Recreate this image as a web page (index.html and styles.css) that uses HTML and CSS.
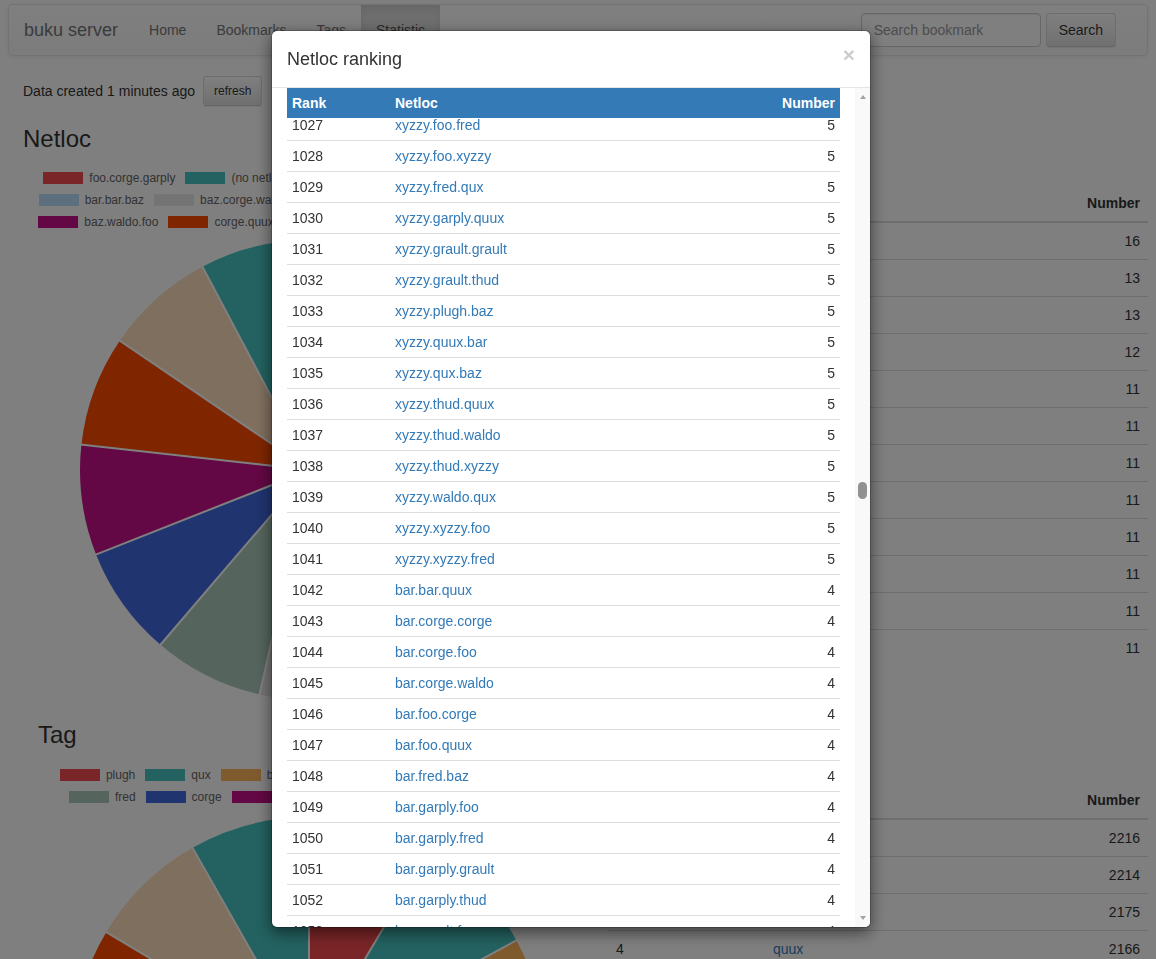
FILE: index.html
```html
<!DOCTYPE html>
<html lang="en">
<head>
<meta charset="utf-8">
<title>buku server - Statistic</title>
<link rel="stylesheet" href="styles.css">
</head>
<body>
<div class="page">
  <nav class="navbar">
    <a class="brand" href="#">buku server</a>
    <ul class="nav-links">
      <li><a href="#">Home</a></li>
      <li><a href="#">Bookmarks</a></li>
      <li><a href="#">Tags</a></li>
      <li class="active"><a href="#">Statistic</a></li>
    </ul>
    <form class="nav-search">
      <input class="search-input" type="text" placeholder="Search bookmark">
      <button class="btn btn-search" type="button">Search</button>
    </form>
  </nav>

  <div class="data-line">Data created 1 minutes ago <button class="btn btn-sm" type="button">refresh</button></div>

  <section class="stat-section">
    <div class="chart-col">
      <h3 class="section-title">Netloc</h3>
      <div class="chart">
        <div class="legend">
          <div class="legend-row">
            <span class="legend-item"><i class="legend-box p1"></i>foo.corge.garply</span>
            <span class="legend-item"><i class="legend-box p2"></i>(no netloc)</span>
            <span class="legend-item"><i class="legend-box p3"></i>fred.quux.xyzzy</span>
            <span class="legend-item"><i class="legend-box p4"></i>garply.waldo.thud</span>
          </div>
          <div class="legend-row">
            <span class="legend-item"><i class="legend-box p5"></i>bar.bar.baz</span>
            <span class="legend-item"><i class="legend-box p6"></i>baz.corge.waldo</span>
            <span class="legend-item"><i class="legend-box p7"></i>corge.thud.waldo</span>
            <span class="legend-item"><i class="legend-box p8"></i>baz.garply.garply</span>
          </div>
          <div class="legend-row">
            <span class="legend-item"><i class="legend-box p9"></i>baz.waldo.foo</span>
            <span class="legend-item"><i class="legend-box p10"></i>corge.quux.thud</span>
            <span class="legend-item"><i class="legend-box p11"></i>foo.garply.grault</span>
            <span class="legend-item"><i class="legend-box p12"></i>foo.plugh.waldo</span>
          </div>
        </div>
        <svg class="pie" width="574" height="464" viewBox="0 0 574 464">
          <g transform="translate(287 232) rotate(-90)">
            <circle class="slice slice-netloc p1" r="115" pathLength="360" stroke-dasharray="40.563 360" stroke-dashoffset="0"/>
            <circle class="slice slice-netloc p2" r="115" pathLength="360" stroke-dasharray="32.958 360" stroke-dashoffset="-40.563"/>
            <circle class="slice slice-netloc p3" r="115" pathLength="360" stroke-dasharray="32.958 360" stroke-dashoffset="-73.521"/>
            <circle class="slice slice-netloc p4" r="115" pathLength="360" stroke-dasharray="30.423 360" stroke-dashoffset="-106.479"/>
            <circle class="slice slice-netloc p5" r="115" pathLength="360" stroke-dasharray="27.887 360" stroke-dashoffset="-136.901"/>
            <circle class="slice slice-netloc p6" r="115" pathLength="360" stroke-dasharray="27.887 360" stroke-dashoffset="-164.789"/>
            <circle class="slice slice-netloc p7" r="115" pathLength="360" stroke-dasharray="27.887 360" stroke-dashoffset="-192.676"/>
            <circle class="slice slice-netloc p8" r="115" pathLength="360" stroke-dasharray="27.887 360" stroke-dashoffset="-220.563"/>
            <circle class="slice slice-netloc p9" r="115" pathLength="360" stroke-dasharray="27.887 360" stroke-dashoffset="-248.451"/>
            <circle class="slice slice-netloc p10" r="115" pathLength="360" stroke-dasharray="27.887 360" stroke-dashoffset="-276.338"/>
            <circle class="slice slice-netloc p11" r="115" pathLength="360" stroke-dasharray="27.887 360" stroke-dashoffset="-304.225"/>
            <circle class="slice slice-netloc p12" r="115" pathLength="360" stroke-dasharray="27.887 360" stroke-dashoffset="-332.113"/>
            <line class="sep" x1="0" y1="0" x2="231" y2="0" transform="rotate(0)"/>
            <line class="sep" x1="0" y1="0" x2="231" y2="0" transform="rotate(40.563)"/>
            <line class="sep" x1="0" y1="0" x2="231" y2="0" transform="rotate(73.521)"/>
            <line class="sep" x1="0" y1="0" x2="231" y2="0" transform="rotate(106.479)"/>
            <line class="sep" x1="0" y1="0" x2="231" y2="0" transform="rotate(136.901)"/>
            <line class="sep" x1="0" y1="0" x2="231" y2="0" transform="rotate(164.789)"/>
            <line class="sep" x1="0" y1="0" x2="231" y2="0" transform="rotate(192.676)"/>
            <line class="sep" x1="0" y1="0" x2="231" y2="0" transform="rotate(220.563)"/>
            <line class="sep" x1="0" y1="0" x2="231" y2="0" transform="rotate(248.451)"/>
            <line class="sep" x1="0" y1="0" x2="231" y2="0" transform="rotate(276.338)"/>
            <line class="sep" x1="0" y1="0" x2="231" y2="0" transform="rotate(304.225)"/>
            <line class="sep" x1="0" y1="0" x2="231" y2="0" transform="rotate(332.113)"/>
          </g>
        </svg>
      </div>
    </div>
    <div class="table-col">
      <h3 class="section-title">Netloc ranking</h3>
      <p class="table-note"><a href="#">View all netlocs</a></p>
      <table class="rank rank-netloc">
        <colgroup><col class="c-rank"><col><col class="c-num"></colgroup>
        <thead><tr><th>Rank</th><th>Netloc</th><th class="num">Number</th></tr></thead>
        <tbody>
          <tr><td>1</td><td><a href="#">foo.corge.garply</a></td><td class="num">16</td></tr>
          <tr><td>2</td><td><a href="#">(no netloc)</a></td><td class="num">13</td></tr>
          <tr><td>3</td><td><a href="#">fred.quux.xyzzy</a></td><td class="num">13</td></tr>
          <tr><td>4</td><td><a href="#">garply.waldo.thud</a></td><td class="num">12</td></tr>
          <tr><td>5</td><td><a href="#">bar.bar.baz</a></td><td class="num">11</td></tr>
          <tr><td>6</td><td><a href="#">baz.corge.waldo</a></td><td class="num">11</td></tr>
          <tr><td>7</td><td><a href="#">corge.thud.waldo</a></td><td class="num">11</td></tr>
          <tr><td>8</td><td><a href="#">baz.garply.garply</a></td><td class="num">11</td></tr>
          <tr><td>9</td><td><a href="#">baz.waldo.foo</a></td><td class="num">11</td></tr>
          <tr><td>10</td><td><a href="#">corge.quux.thud</a></td><td class="num">11</td></tr>
          <tr><td>11</td><td><a href="#">foo.garply.grault</a></td><td class="num">11</td></tr>
          <tr><td>12</td><td><a href="#">foo.plugh.waldo</a></td><td class="num">11</td></tr>
        </tbody>
      </table>
    </div>
  </section>

  <section class="stat-section">
    <div class="chart-col">
      <h3 class="section-title indent">Tag</h3>
      <div class="chart">
        <div class="legend">
          <div class="legend-row">
            <span class="legend-item"><i class="legend-box p1"></i>plugh</span>
            <span class="legend-item"><i class="legend-box p2"></i>qux</span>
            <span class="legend-item"><i class="legend-box p3"></i>bar</span>
            <span class="legend-item"><i class="legend-box p4"></i>quux</span>
            <span class="legend-item"><i class="legend-box p5"></i>waldo</span>
            <span class="legend-item"><i class="legend-box p6"></i>xyzzy-foo</span>
          </div>
          <div class="legend-row">
            <span class="legend-item"><i class="legend-box p7"></i>fred</span>
            <span class="legend-item"><i class="legend-box p8"></i>corge</span>
            <span class="legend-item"><i class="legend-box p9"></i>thud</span>
            <span class="legend-item"><i class="legend-box p10"></i>grault</span>
            <span class="legend-item"><i class="legend-box p11"></i>baz</span>
            <span class="legend-item"><i class="legend-box p12"></i>garply</span>
          </div>
        </div>
        <svg class="pie" width="574" height="482" viewBox="0 0 574 482">
          <g transform="translate(286 240) rotate(-90)">
            <circle class="slice slice-tag p1" r="118" pathLength="360" stroke-dasharray="30.764 360" stroke-dashoffset="0"/>
            <circle class="slice slice-tag p2" r="118" pathLength="360" stroke-dasharray="30.737 360" stroke-dashoffset="-30.764"/>
            <circle class="slice slice-tag p3" r="118" pathLength="360" stroke-dasharray="30.196 360" stroke-dashoffset="-61.501"/>
            <circle class="slice slice-tag p4" r="118" pathLength="360" stroke-dasharray="30.071 360" stroke-dashoffset="-91.697"/>
            <circle class="slice slice-tag p5" r="118" pathLength="360" stroke-dasharray="29.987 360" stroke-dashoffset="-121.768"/>
            <circle class="slice slice-tag p6" r="118" pathLength="360" stroke-dasharray="29.960 360" stroke-dashoffset="-151.755"/>
            <circle class="slice slice-tag p7" r="118" pathLength="360" stroke-dasharray="29.848 360" stroke-dashoffset="-181.715"/>
            <circle class="slice slice-tag p8" r="118" pathLength="360" stroke-dasharray="29.807 360" stroke-dashoffset="-211.563"/>
            <circle class="slice slice-tag p9" r="118" pathLength="360" stroke-dasharray="29.723 360" stroke-dashoffset="-241.370"/>
            <circle class="slice slice-tag p10" r="118" pathLength="360" stroke-dasharray="29.696 360" stroke-dashoffset="-271.093"/>
            <circle class="slice slice-tag p11" r="118" pathLength="360" stroke-dasharray="29.640 360" stroke-dashoffset="-300.789"/>
            <circle class="slice slice-tag p12" r="118" pathLength="360" stroke-dasharray="29.571 360" stroke-dashoffset="-330.429"/>
            <line class="sep" x1="0" y1="0" x2="237" y2="0" transform="rotate(0)"/>
            <line class="sep" x1="0" y1="0" x2="237" y2="0" transform="rotate(30.764)"/>
            <line class="sep" x1="0" y1="0" x2="237" y2="0" transform="rotate(61.501)"/>
            <line class="sep" x1="0" y1="0" x2="237" y2="0" transform="rotate(91.697)"/>
            <line class="sep" x1="0" y1="0" x2="237" y2="0" transform="rotate(121.768)"/>
            <line class="sep" x1="0" y1="0" x2="237" y2="0" transform="rotate(151.755)"/>
            <line class="sep" x1="0" y1="0" x2="237" y2="0" transform="rotate(181.715)"/>
            <line class="sep" x1="0" y1="0" x2="237" y2="0" transform="rotate(211.563)"/>
            <line class="sep" x1="0" y1="0" x2="237" y2="0" transform="rotate(241.370)"/>
            <line class="sep" x1="0" y1="0" x2="237" y2="0" transform="rotate(271.093)"/>
            <line class="sep" x1="0" y1="0" x2="237" y2="0" transform="rotate(300.789)"/>
            <line class="sep" x1="0" y1="0" x2="237" y2="0" transform="rotate(330.429)"/>
          </g>
        </svg>
      </div>
    </div>
    <div class="table-col">
      <h3 class="section-title">Tag ranking</h3>
      <p class="table-note"><a href="#">View all tags</a></p>
      <table class="rank">
        <colgroup><col class="c-rank"><col><col class="c-num"></colgroup>
        <thead><tr><th>Rank</th><th>Tag</th><th class="num">Number</th></tr></thead>
        <tbody>
          <tr><td>1</td><td><a href="#">plugh</a></td><td class="num">2216</td></tr>
          <tr><td>2</td><td><a href="#">qux</a></td><td class="num">2214</td></tr>
          <tr><td>3</td><td><a href="#">bar</a></td><td class="num">2175</td></tr>
          <tr><td>4</td><td><a href="#">quux</a></td><td class="num">2166</td></tr>
          <tr><td>5</td><td><a href="#">waldo</a></td><td class="num">2160</td></tr>
          <tr><td>6</td><td><a href="#">xyzzy-foo</a></td><td class="num">2158</td></tr>
        </tbody>
      </table>
    </div>
  </section>
</div>

<div class="modal-backdrop"></div>
<div class="modal">
  <div class="modal-dialog">
    <div class="modal-content">
      <div class="modal-header">
        <h4 class="modal-title">Netloc ranking</h4>
        <button class="close" type="button">&times;</button>
      </div>
      <div class="modal-body">
        <div class="rank-pane">
          <table class="list">
            <colgroup><col class="l-rank"><col><col class="l-num"></colgroup>
            <thead><tr><th>Rank</th><th>Netloc</th><th class="num">Number</th></tr></thead>
          </table>
          <div class="rows-viewport">
            <table class="list list-rows">
              <colgroup><col class="l-rank"><col><col class="l-num"></colgroup>
              <tbody>
                <tr><td>1027</td><td><a href="#">xyzzy.foo.fred</a></td><td class="num">5</td></tr>
                <tr><td>1028</td><td><a href="#">xyzzy.foo.xyzzy</a></td><td class="num">5</td></tr>
                <tr><td>1029</td><td><a href="#">xyzzy.fred.qux</a></td><td class="num">5</td></tr>
                <tr><td>1030</td><td><a href="#">xyzzy.garply.quux</a></td><td class="num">5</td></tr>
                <tr><td>1031</td><td><a href="#">xyzzy.grault.grault</a></td><td class="num">5</td></tr>
                <tr><td>1032</td><td><a href="#">xyzzy.grault.thud</a></td><td class="num">5</td></tr>
                <tr><td>1033</td><td><a href="#">xyzzy.plugh.baz</a></td><td class="num">5</td></tr>
                <tr><td>1034</td><td><a href="#">xyzzy.quux.bar</a></td><td class="num">5</td></tr>
                <tr><td>1035</td><td><a href="#">xyzzy.qux.baz</a></td><td class="num">5</td></tr>
                <tr><td>1036</td><td><a href="#">xyzzy.thud.quux</a></td><td class="num">5</td></tr>
                <tr><td>1037</td><td><a href="#">xyzzy.thud.waldo</a></td><td class="num">5</td></tr>
                <tr><td>1038</td><td><a href="#">xyzzy.thud.xyzzy</a></td><td class="num">5</td></tr>
                <tr><td>1039</td><td><a href="#">xyzzy.waldo.qux</a></td><td class="num">5</td></tr>
                <tr><td>1040</td><td><a href="#">xyzzy.xyzzy.foo</a></td><td class="num">5</td></tr>
                <tr><td>1041</td><td><a href="#">xyzzy.xyzzy.fred</a></td><td class="num">5</td></tr>
                <tr><td>1042</td><td><a href="#">bar.bar.quux</a></td><td class="num">4</td></tr>
                <tr><td>1043</td><td><a href="#">bar.corge.corge</a></td><td class="num">4</td></tr>
                <tr><td>1044</td><td><a href="#">bar.corge.foo</a></td><td class="num">4</td></tr>
                <tr><td>1045</td><td><a href="#">bar.corge.waldo</a></td><td class="num">4</td></tr>
                <tr><td>1046</td><td><a href="#">bar.foo.corge</a></td><td class="num">4</td></tr>
                <tr><td>1047</td><td><a href="#">bar.foo.quux</a></td><td class="num">4</td></tr>
                <tr><td>1048</td><td><a href="#">bar.fred.baz</a></td><td class="num">4</td></tr>
                <tr><td>1049</td><td><a href="#">bar.garply.foo</a></td><td class="num">4</td></tr>
                <tr><td>1050</td><td><a href="#">bar.garply.fred</a></td><td class="num">4</td></tr>
                <tr><td>1051</td><td><a href="#">bar.garply.grault</a></td><td class="num">4</td></tr>
                <tr><td>1052</td><td><a href="#">bar.garply.thud</a></td><td class="num">4</td></tr>
                <tr><td>1053</td><td><a href="#">bar.grault.foo</a></td><td class="num">4</td></tr>
                <tr><td>1054</td><td><a href="#">bar.grault.plugh</a></td><td class="num">4</td></tr>
              </tbody>
            </table>
          </div>
        </div>
        <div class="scrollbar">
          <span class="sb-arrow sb-up"></span>
          <span class="sb-thumb" style="margin-top:383px"></span>
          <span class="sb-arrow sb-down"></span>
        </div>
      </div>
    </div>
  </div>
</div>
</body>
</html>
```

FILE: styles.css
```css
* { box-sizing: border-box; }
html, body { margin: 0; height: 100%; }
body {
  font-family: "Liberation Sans", Arial, Helvetica, sans-serif;
  font-size: 14px;
  line-height: 1.42857143;
  color: #333;
  background: #fff;
  overflow: hidden;
}
a { color: #337ab7; text-decoration: none; }

.page { padding: 4px 8px 0; }

/* navbar */
.navbar {
  display: flex;
  height: 52px;
  margin-bottom: 20px;
  border: 1px solid #e7e7e7;
  border-radius: 4px;
  background: linear-gradient(to bottom, #fff 0, #f8f8f8 100%);
  box-shadow: inset 0 1px 0 rgba(255,255,255,.15), 0 1px 5px rgba(0,0,0,.075);
}
.brand {
  padding: 15px;
  font-size: 18px;
  line-height: 20px;
  color: #777;
  text-shadow: 0 1px 0 rgba(255,255,255,.25);
}
.nav-links { display: flex; list-style: none; margin: 0; padding: 0 0 0 1px; }
.nav-links a {
  display: block;
  padding: 15px;
  line-height: 20px;
  color: #777;
  text-shadow: 0 1px 0 rgba(255,255,255,.25);
}
.nav-links .active a {
  color: #555;
  background: linear-gradient(to bottom, #dbdbdb 0, #e2e2e2 100%);
  box-shadow: inset 0 3px 9px rgba(0,0,0,.075);
}
.nav-search {
  margin: 0 0 0 auto;
  display: flex;
  align-items: flex-start;
  gap: 5px;
  padding: 8px 31px 0 0;
}
.search-input {
  width: 180px;
  height: 34px;
  padding: 6px 12px;
  font-family: inherit;
  font-size: 14px;
  color: #555;
  background: #fff;
  border: 1px solid #ccc;
  border-radius: 4px;
  box-shadow: inset 0 1px 1px rgba(0,0,0,.075);
}
.search-input::placeholder { color: #999; }

.btn {
  display: inline-block;
  font-family: inherit;
  color: #333;
  border: 1px solid #ccc;
  border-color: #dbdbdb #dbdbdb #ccc;
  border-radius: 4px;
  background: linear-gradient(to bottom, #fff 0, #e0e0e0 100%);
  text-shadow: 0 1px 0 #fff;
  box-shadow: inset 0 1px 0 rgba(255,255,255,.15), 0 1px 1px rgba(0,0,0,.075);
}
.btn-search { height: 34px; padding: 6px 12px; font-size: 14px; line-height: 20px; }
.btn-sm { height: 30px; padding: 5px 10px; font-size: 12px; line-height: 18px; border-radius: 3px; }

.data-line {
  display: flex;
  align-items: center;
  gap: 8px;
  height: 30px;
  padding-left: 15px;
}

/* statistic sections */
.stat-section {
  display: grid;
  grid-template-columns: 589px 540px;
  column-gap: 11px;
  align-items: start;
}
.chart-col { padding-left: 15px; }
.section-title {
  margin: 20px 0 10px;
  font-size: 24px;
  font-weight: 500;
  line-height: 1.1;
}
.section-title.indent { padding-left: 15px; }
.chart { height: 540px; }
.legend { padding-top: 10px; }
.legend-row {
  display: flex;
  justify-content: center;
  gap: 10px;
  height: 22px;
}
.legend-item {
  display: flex;
  gap: 6px;
  font-size: 12px;
  line-height: 12px;
  color: #666;
  white-space: nowrap;
}
.legend-box { display: block; width: 40px; height: 12px; }
.pie { display: block; }
.slice { fill: none; }
.slice-netloc { stroke-width: 230; }
.slice-tag { stroke-width: 236; }
.sep { stroke: #fff; stroke-width: 2; }

/* palette */
.p1 { background: #f44a50; stroke: #f44a50; }
.p2 { background: #46c4c0; stroke: #46c4c0; }
.p3 { background: #ffb45a; stroke: #ffb45a; }
.p4 { background: #8bc34a; stroke: #8bc34a; }
.p5 { background: #badcfc; stroke: #badcfc; }
.p6 { background: #e8e8e8; stroke: #e8e8e8; }
.p7 { background: #aacabc; stroke: #aacabc; }
.p8 { background: #4068e0; stroke: #4068e0; }
.p9 { background: #c61088; stroke: #c61088; }
.p10 { background: #ff4c00; stroke: #ff4c00; }
.p11 { background: #fedebc; stroke: #fedebc; }
.p12 { background: #46c4c0; stroke: #46c4c0; }

.table-note { margin: 0; height: 23px; font-size: 12px; line-height: 23px; }
.rank { width: 100%; border-collapse: collapse; table-layout: fixed; }
.rank .c-rank { width: 157px; }
.rank-netloc .c-rank { width: 90px; }
.rank .c-num { width: 90px; }
.rank th, .rank td {
  padding: 8px;
  line-height: 20px;
  text-align: left;
  vertical-align: top;
  white-space: nowrap;
  border-top: 1px solid #ddd;
}
.rank thead th { border-top: 0; border-bottom: 2px solid #ddd; vertical-align: bottom; }
.rank .num, .list .num { text-align: right; }

/* modal */
.modal-backdrop { position: fixed; inset: 0; background: #000; opacity: .5; }
.modal { position: fixed; inset: 0; padding-right: 14px; overflow: hidden; }
.modal-dialog { width: 600px; margin: 30px auto; }
.modal-content {
  background: #fff;
  background-clip: padding-box;
  border: 1px solid rgba(0,0,0,.2);
  border-radius: 6px;
  box-shadow: 0 5px 15px rgba(0,0,0,.5);
  overflow: hidden;
}
.modal-header {
  display: flex;
  justify-content: space-between;
  align-items: flex-start;
  padding: 16px 15px 14px;
  border-bottom: 1px solid #e5e5e5;
}
.modal-title { margin: 0; font-size: 18px; font-weight: 500; line-height: 1.42857143; }
.close {
  margin-top: -3px;
  padding: 0;
  border: 0;
  background: none;
  font-family: inherit;
  font-size: 21px;
  font-weight: 700;
  line-height: 1;
  color: #000;
  text-shadow: 0 1px 0 #fff;
  opacity: .2;
}
.modal-body { display: flex; height: calc(100vh - 120px); }
.rank-pane {
  flex: 1;
  min-width: 0;
  padding: 0 15px;
  display: flex;
  flex-direction: column;
  overflow: hidden;
}
.list { width: 100%; border-collapse: collapse; table-layout: fixed; }
.list .l-rank { width: 103px; }
.list .l-num { width: 100px; }
.list th, .list td { padding: 5px; line-height: 20px; text-align: left; }
.list th { background: #337ab7; color: #fff; font-weight: 700; }
.list td { border-top: 1px solid #ddd; }
.rows-viewport { flex: 1; min-height: 0; overflow: hidden; }
.list-rows { margin-top: -9px; }

.scrollbar {
  width: 15px;
  flex: none;
  background: #f9f9f9;
  display: flex;
  flex-direction: column;
  align-items: center;
}
.sb-arrow { width: 0; height: 0; border-left: 3.5px solid transparent; border-right: 3.5px solid transparent; }
.sb-up { margin-top: 7px; border-bottom: 4px solid #a3a3a3; }
.sb-down { margin-top: auto; margin-bottom: 7px; border-top: 4px solid #a3a3a3; }
.sb-thumb { width: 9px; height: 17px; border-radius: 5px; background: #919191; }
```
